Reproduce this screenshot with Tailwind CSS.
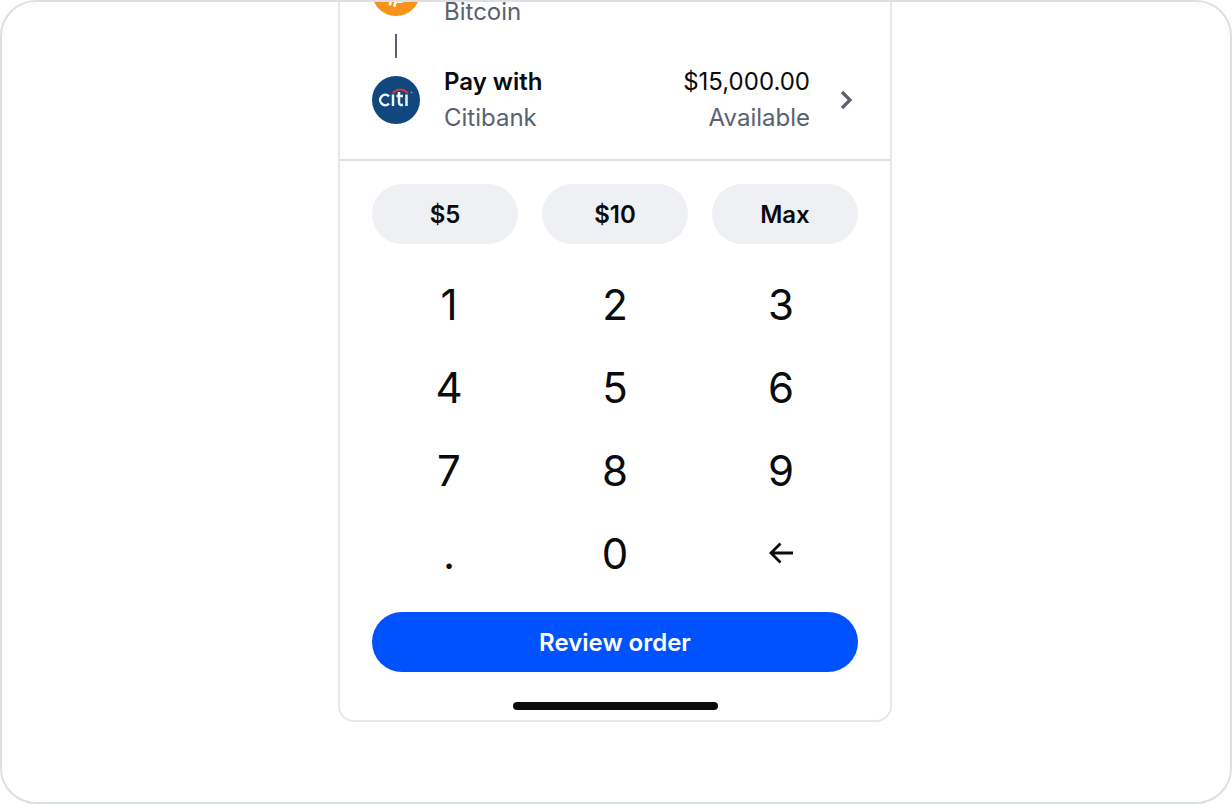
<!DOCTYPE html>
<html lang="en">
<head>
    <meta charset="UTF-8">
    <meta name="viewport" content="width=device-width, initial-scale=1.0">
    <title>Buy Bitcoin</title>
    <script src="https://cdn.jsdelivr.net/npm/@tailwindcss/browser@4"></script>
</head>
<body class="bg-white font-['Inter',sans-serif] text-[#0a0b0d]">
    <main class="flex min-h-screen items-start justify-center overflow-hidden rounded-[36px] border-2 border-[#dedfe3] pr-0.5">
        <div class="w-full max-w-[554px] rounded-b-2xl border-2 border-t-0 border-[#e7e7eb]">
            <!-- Order details -->
            <section class="border-b-2 border-[#dedfe3] px-8 pb-[23px] text-2xl leading-9">
                <div class="flex h-7 items-end gap-6">
                    <svg class="mb-[14px] size-12 shrink-0" viewBox="0 0 32 32" aria-hidden="true">
                        <circle cx="16" cy="16" r="16" fill="#f7931a"/>
                        <path fill="#fff" fill-rule="evenodd" d="M23.189 14.02c.314-2.096-1.283-3.223-3.465-3.975l.708-2.84-1.728-.43-.69 2.765c-.454-.114-.92-.22-1.385-.326l.695-2.783L15.596 6l-.708 2.839c-.376-.086-.746-.17-1.104-.26l.002-.009-2.384-.595-.46 1.846s1.283.294 1.256.312c.7.175.826.638.805 1.006l-.806 3.235c.048.012.11.03.18.057l-.183-.045-1.13 4.532c-.086.212-.303.531-.793.41.018.025-1.256-.313-1.256-.313l-.858 1.978 2.25.561c.418.105.828.215 1.231.318l-.715 2.872 1.727.43.708-2.84c.472.127.93.245 1.378.357l-.706 2.828 1.728.43.715-2.866c2.948.558 5.164.333 6.097-2.333.752-2.146-.037-3.385-1.588-4.192 1.13-.26 1.98-1.003 2.207-2.538zm-3.95 5.538c-.533 2.147-4.148.986-5.32.695l.95-3.805c1.172.293 4.929.872 4.37 3.11zm.535-5.569c-.487 1.953-3.495.96-4.47.717l.86-3.45c.975.243 4.118.696 3.61 2.733z"/>
                    </svg>
                    <p class="text-[#5b616e]">Bitcoin</p>
                </div>
                <div class="w-12 pt-1 pb-1.5">
                    <div class="mx-auto h-6 w-0.5 bg-[#5b616e]"></div>
                </div>
                <div class="flex items-center gap-6">
                    <svg class="size-12 shrink-0" viewBox="0 0 48 48" aria-hidden="true">
                        <circle cx="24" cy="24" r="24" fill="#0f477e"/>
                        <g fill="none" stroke="#f0f3f8" stroke-width="2.500">
                            <path d="M17 20.300a5.200 5.200 0 1 0 0 7.400"/>
                            <path d="M21 18.500v11.500M27 16v10.500q0 3 4 2.300M24.500 20h6.500M34.500 18.500v11.500"/>
                        </g>
                        <path d="M20.500 17q7.500-7 15.500 0" fill="none" stroke="#d8373a" stroke-width="2"/>
                        <circle cx="39.500" cy="16.500" r=".8" fill="#9bb3cb"/>
                    </svg>
                    <div class="flex-1">
                        <p class="font-semibold">Pay with</p>
                        <p class="text-[#5b616e]">Citibank</p>
                    </div>
                    <div class="text-right">
                        <p>$15,000.00</p>
                        <p class="text-[#5b616e]">Available</p>
                    </div>
                    <button type="button" aria-label="Change payment method" class="size-6">
                        <svg class="size-6" viewBox="0 0 24 24" fill="none" stroke="#5b616e" stroke-width="3.200">
                            <path d="M8 4l8 8-8 8"/>
                        </svg>
                    </button>
                </div>
            </section>

            <section class="px-8 pt-[23px] pb-2.5">
                <!-- Quick amounts -->
                <div class="grid grid-cols-3 gap-6 text-2xl font-semibold">
                    <button type="button" class="h-[60px] rounded-full bg-[#eef0f3] pt-0.5">$5</button>
                    <button type="button" class="h-[60px] rounded-full bg-[#eef0f3] pt-0.5">$10</button>
                    <button type="button" class="h-[60px] rounded-full bg-[#eef0f3] pt-0.5">Max</button>
                </div>

                <!-- Keypad -->
                <div class="-mx-1.5 mt-[19px] grid auto-rows-[83px] grid-cols-3 text-[42px]">
                    <button type="button">1</button>
                    <button type="button">2</button>
                    <button type="button">3</button>
                    <button type="button">4</button>
                    <button type="button">5</button>
                    <button type="button">6</button>
                    <button type="button">7</button>
                    <button type="button">8</button>
                    <button type="button">9</button>
                    <button type="button">.</button>
                    <button type="button">0</button>
                    <button type="button" aria-label="Delete" class="flex items-center justify-center">
                        <svg class="size-6" viewBox="0 0 24 24" fill="none" stroke="#0a0b0d" stroke-width="2.800">
                            <path d="M24 11H2M11.500 1.500L2 11l9.500 9.500"/>
                        </svg>
                    </button>
                </div>

                <button type="button" class="mt-[17px] h-[60px] w-full rounded-full bg-[#0052ff] pt-0.5 text-2xl font-semibold text-white">Review order</button>
                <div class="mx-auto mt-[30px] h-2 w-[205px] rounded-full bg-[#0a0b0d]"></div>
            </section>
        </div>
    </main>
</body>
</html>
